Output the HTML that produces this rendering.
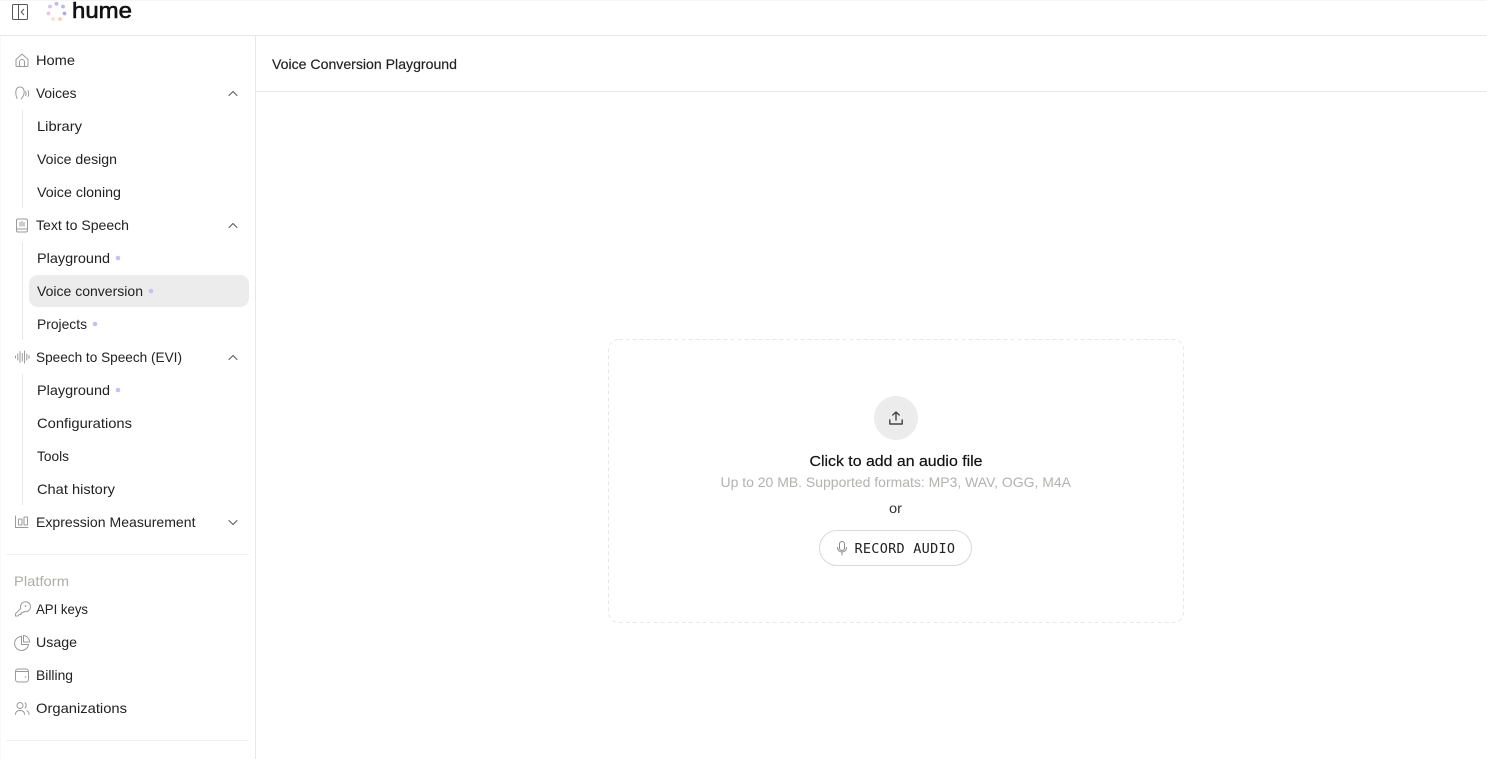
<!DOCTYPE html>
<html lang="en">
<head>
<meta charset="utf-8">
<title>Voice Conversion Playground</title>
<style>
html,body{margin:0;padding:0;background:#fff;width:1487px;height:759px;overflow:hidden}
svg{display:block}
text{font-family:"Liberation Sans",Arial,sans-serif;font-size:14px;fill:#222}
.i{fill:none;stroke:#9a9a98;stroke-width:1;stroke-linecap:round;stroke-linejoin:round}
.c{fill:none;stroke:#555;stroke-width:1;stroke-linecap:round;stroke-linejoin:round}
</style>
</head>
<body>
<svg width="1487" height="759" viewBox="0 0 1487 759" xmlns="http://www.w3.org/2000/svg">
<rect width="1487" height="759" fill="#fff"/>
<!-- frame lines -->
<rect x="0" y="35" width="1487" height="1" fill="#e8e8e6"/>
<rect x="255" y="36" width="1" height="723" fill="#e8e8e6"/>
<rect x="256" y="91" width="1231" height="1" fill="#e8e8e6"/>
<rect x="0" y="0" width="1487" height="1" fill="#f5f5f5"/>
<rect x="0" y="36" width="1" height="723" fill="#f8f8f8"/>

<!-- top bar -->
<g fill="none" stroke="#555" stroke-width="1">
<rect x="12.500" y="4.500" width="15" height="15" rx="1"/>
<path d="M18.500 4.500V19.500"/>
<path d="M24 9L21.200 12L24 15"/>
</g>
<circle cx="56.500" cy="3.800" r="1.900" fill="#c4b4ea"/>
<circle cx="63" cy="6.500" r="1.900" fill="#b9b6e8"/>
<circle cx="64.500" cy="13.500" r="1.900" fill="#b5a8e0"/>
<circle cx="60" cy="19" r="1.900" fill="#f8d2b0"/>
<circle cx="53" cy="19" r="1.900" fill="#f9e0d8"/>
<circle cx="48.500" cy="13.500" r="1.900" fill="#f2c4e0"/>
<circle cx="50" cy="6.500" r="1.900" fill="#d6c0ec"/>
<text x="72" y="18" textLength="60" lengthAdjust="spacingAndGlyphs" style="font-size:22px;fill:#111;stroke:#111;stroke-width:.6">hume</text>

<!-- sidebar tree lines -->
<rect x="22" y="110" width="1" height="98" fill="#e8e8e6"/>
<rect x="22" y="242" width="1" height="98" fill="#e8e8e6"/>
<rect x="22" y="374" width="1" height="131" fill="#e8e8e6"/>
<!-- active -->
<rect x="29" y="275" width="220" height="32" rx="9" fill="#ececec"/>

<!-- nav text -->
<text x="36" y="65" textLength="39" lengthAdjust="spacingAndGlyphs">Home</text>
<text x="36" y="98" textLength="40.500" lengthAdjust="spacingAndGlyphs">Voices</text>
<text x="37" y="131" textLength="45" lengthAdjust="spacingAndGlyphs">Library</text>
<text x="37" y="164" textLength="80" lengthAdjust="spacingAndGlyphs">Voice design</text>
<text x="37" y="197" textLength="84" lengthAdjust="spacingAndGlyphs">Voice cloning</text>
<text x="36" y="230" textLength="93" lengthAdjust="spacingAndGlyphs">Text to Speech</text>
<text x="37" y="263" textLength="73" lengthAdjust="spacingAndGlyphs">Playground</text>
<text x="37" y="296" textLength="106" lengthAdjust="spacingAndGlyphs">Voice conversion</text>
<text x="37" y="329" textLength="50" lengthAdjust="spacingAndGlyphs">Projects</text>
<text x="36" y="362" textLength="146" lengthAdjust="spacingAndGlyphs">Speech to Speech (EVI)</text>
<text x="37" y="395" textLength="73" lengthAdjust="spacingAndGlyphs">Playground</text>
<text x="37" y="428" textLength="95" lengthAdjust="spacingAndGlyphs">Configurations</text>
<text x="37" y="461" textLength="32" lengthAdjust="spacingAndGlyphs">Tools</text>
<text x="37" y="494" textLength="78" lengthAdjust="spacingAndGlyphs">Chat history</text>
<text x="36" y="527" textLength="159.500" lengthAdjust="spacingAndGlyphs">Expression Measurement</text>
<text x="14" y="586" textLength="55" lengthAdjust="spacingAndGlyphs" style="fill:#adadab">Platform</text>
<text x="36" y="614" textLength="52" lengthAdjust="spacingAndGlyphs">API keys</text>
<text x="36" y="647" textLength="41" lengthAdjust="spacingAndGlyphs">Usage</text>
<text x="36" y="680" textLength="37" lengthAdjust="spacingAndGlyphs">Billing</text>
<text x="36" y="713" textLength="91" lengthAdjust="spacingAndGlyphs">Organizations</text>

<!-- dots -->
<circle cx="118" cy="258" r="2.300" fill="#cbbff0"/>
<circle cx="151" cy="291" r="2.300" fill="#cbbff0"/>
<circle cx="95" cy="324" r="2.300" fill="#cbbff0"/>
<circle cx="118" cy="390" r="2.300" fill="#cbbff0"/>

<!-- chevrons -->
<path class="c" d="M229 95.500L233 91.500L237 95.500"/>
<path class="c" d="M229 227.500L233 223.500L237 227.500"/>
<path class="c" d="M229 359.500L233 355.500L237 359.500"/>
<path class="c" d="M229 520.500L233 524.500L237 520.500"/>

<!-- home -->
<g class="i">
<path d="M16 59.500L22 54L28 59.500V65.500a1 1 0 0 1-1 1H17a1 1 0 0 1-1-1Z"/>
<path d="M19.500 66.500V62a2.500 2.500 0 0 1 5 0V66.500"/>
</g>
<!-- voices -->
<g class="i">
<path d="M17 98.500C14.500 92 16 87 20 87C24 87 25 91.500 23.500 95.500C23 97 21.500 97.500 21.500 99"/>
<path d="M25.500 91.500C26.300 92.500 26.300 94.500 25.500 95.500"/>
<path d="M28 90.500C29 92 29 95 28 96.500"/>
</g>
<!-- text to speech -->
<g class="i">
<rect x="16.500" y="219" width="11" height="13" rx="1.500"/>
<path d="M16.500 229H27.500"/>
<path d="M20 222.500V226M22 221.500V226M24 222.500V226"/>
</g>
<!-- evi wave -->
<g class="i">
<path d="M15.500 356V358M17.800 354V360M20 351.500V362.500M22.300 353.500V361M24.500 351V363M26.800 354V360M29 355.500V358.500"/>
</g>
<!-- expression -->
<g class="i">
<path d="M15.500 516V527.500H28"/>
<rect x="18.500" y="519" width="3.500" height="6" rx=".5"/>
<rect x="24" y="517" width="3.500" height="8" rx=".5"/>
</g>
<!-- key -->
<g class="i">
<path d="M20.500 606.500A5 5 0 1 1 24 611.500L22.700 612.800H21V614.500H19.300L17.800 616H15.500V613.700L20.800 608.400C20.500 607.800 20.400 607.200 20.500 606.500Z"/>
<circle cx="25.500" cy="606" r=".4"/>
</g>
<!-- usage -->
<g class="i">
<path d="M21 636.500A7 7 0 1 0 28.500 644.500H21.500"/>
<path d="M21.500 644.500V636"/>
<path d="M23.500 635.500A6.500 6.500 0 0 1 29.500 642H23.500Z"/>
</g>
<!-- billing -->
<g class="i">
<rect x="15.500" y="669" width="13" height="13" rx="2.500"/>
<path d="M16 671.500H28"/>
<circle cx="25.500" cy="677" r=".3"/>
</g>
<!-- organizations -->
<g class="i">
<circle cx="20" cy="705.500" r="3"/>
<path d="M15.500 714.500C15.500 711.500 17.500 710.500 20 710.500C22.500 710.500 24.500 711.500 24.500 714.500"/>
<path d="M25 702.800C26.500 703.500 26.500 707 25 708"/>
<path d="M27 710.800C28.500 711.500 29 713 29 714.500"/>
</g>

<!-- separators -->
<rect x="6" y="554" width="243" height="1" fill="#f0f0ee"/>
<rect x="6" y="740" width="243" height="1" fill="#f0f0ee"/>

<!-- header -->
<text x="272" y="69" textLength="185" lengthAdjust="spacingAndGlyphs" style="stroke:#1c1c1c;stroke-width:.15">Voice Conversion Playground</text>

<!-- drop zone -->
<rect x="608.500" y="339.500" width="575" height="283" rx="10" fill="none" stroke="#e8e8e6" stroke-dasharray="4 3"/>
<circle cx="896" cy="418" r="22" fill="#ececec"/>
<g fill="none" stroke="#444" stroke-width="1.400" stroke-linecap="round" stroke-linejoin="round">
<path d="M896 420V412.500M892.800 415L896 412L899.200 415"/>
<path d="M889.800 420V424H902.200V420"/>
</g>
<text x="809.500" y="466" textLength="173" lengthAdjust="spacingAndGlyphs" style="font-size:15px;fill:#111;stroke:#111;stroke-width:.2">Click to add an audio file</text>
<text x="720.500" y="487" textLength="350.500" lengthAdjust="spacingAndGlyphs" style="fill:#b2b2b0">Up to 20 MB. Supported formats: MP3, WAV, OGG, M4A</text>
<text x="889" y="513" textLength="13" lengthAdjust="spacingAndGlyphs" style="fill:#333">or</text>
<rect x="819.500" y="530.500" width="152" height="35" rx="17.500" fill="#fff" stroke="#d8d8d6"/>
<g fill="none" stroke="#888" stroke-width="1" stroke-linecap="round" stroke-linejoin="round">
<rect x="839.500" y="541.500" width="5" height="9" rx="2.500"/>
<path d="M837.500 547.500a4.500 4.500 0 0 0 9 0M842 552V555"/>
</g>
<text x="854.500" y="553" textLength="100.500" lengthAdjust="spacing" style="font-family:'DejaVu Sans Mono','Liberation Mono',monospace;font-size:13.500px;fill:#222">RECORD AUDIO</text>
</svg>
</body>
</html>
